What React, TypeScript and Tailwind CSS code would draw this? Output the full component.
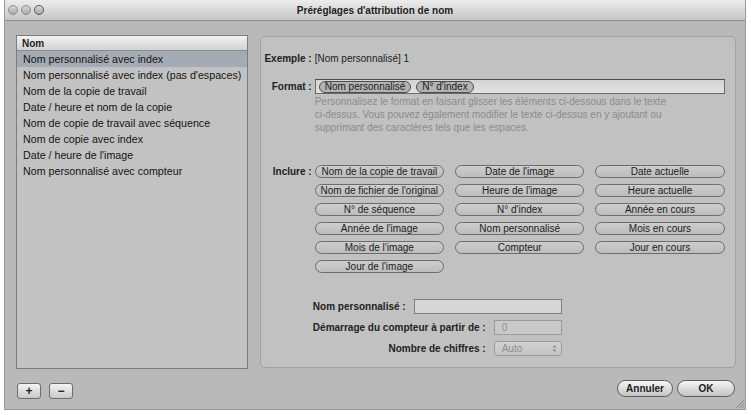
import React from 'react';

const presets = [
  'Nom personnalisé avec index',
  "Nom personnalisé avec index (pas d'espaces)",
  'Nom de la copie de travail',
  'Date / heure et nom de la copie',
  'Nom de copie de travail avec séquence',
  'Nom de copie avec index',
  "Date / heure de l'image",
  'Nom personnalisé avec compteur',
];

const tokens = [
  'Nom de la copie de travail',
  "Date de l'image",
  'Date actuelle',
  "Nom de fichier de l'original",
  "Heure de l'image",
  'Heure actuelle',
  'N° de séquence',
  "N° d'index",
  'Année en cours',
  "Année de l'image",
  'Nom personnalisé',
  'Mois en cours',
  "Mois de l'image",
  'Compteur',
  'Jour en cours',
  "Jour de l'image",
];

const font = 'font-["Liberation_Sans",Arial,sans-serif]';

const TrafficLight = ({ dark }: { dark?: boolean }) => (
  <span
    className={`block w-[10px] h-[10px] rounded-full bg-gradient-to-b from-[#d8d8d8] to-[#a9a9a9] border ${dark ? 'border-[#555]' : 'border-[#8c8c8c]'}`}
  />
);

const Token = ({ label }: { label: string }) => (
  <div className="h-[13px] rounded-full border border-[#6c6c6c] bg-gradient-to-b from-[#cdcdcd] to-[#bdbdbd] flex items-center justify-center text-[10px] leading-none text-[#1c1c1c] whitespace-nowrap overflow-hidden">
    {label}
  </div>
);

const FieldRow = ({ label, children }: { label: string; children: React.ReactNode }) => (
  <div className="flex justify-end items-center gap-[8px] h-[15px]">
    <span className="text-[10px] font-bold text-[#222] whitespace-nowrap">{label}</span>
    {children}
  </div>
);

export default function App() {
  return (
    <div className={`w-[751px] h-[415px] bg-white overflow-hidden ${font}`}>
      <div className="ml-[4px] w-[742px] h-[410px] flex flex-col bg-[#b9b9b9] border-x border-b border-[#9a9a9a]">
        {/* Title bar */}
        <div className="h-[21px] shrink-0 relative flex items-center bg-gradient-to-b from-[#ececec] to-[#c6c6c6] border-b border-[#8f8f8f]">
          <div className="flex items-center gap-[3px] pl-[3px]">
            <TrafficLight />
            <TrafficLight />
            <TrafficLight dark />
          </div>
          <span className="absolute left-0 right-0 text-center text-[10px] font-bold text-[#1e1e1e] pointer-events-none">
            Préréglages d'attribution de nom
          </span>
        </div>

        {/* Body */}
        <div className="flex-1 flex flex-col pl-[11px] pr-[9px] pt-[14px]">
          <div className="flex gap-[12px]">
            {/* Preset list */}
            <div className="w-[232px] h-[334px] border border-[#7d7d7d] bg-[#c2c2c2] flex flex-col">
              <div className="h-[15px] border-b border-[#8c8c8c] bg-gradient-to-b from-[#f2f2f2] to-[#d2d2d2] flex items-center pl-[5px] text-[10px] font-bold text-[#1e1e1e]">
                Nom
              </div>
              {presets.map((p, i) => (
                <div
                  key={p}
                  className={`h-[16px] flex items-center pl-[6px] text-[10.7px] text-[#141414] whitespace-nowrap ${i === 0 ? 'bg-[#a5abb4]' : ''}`}
                >
                  {p}
                </div>
              ))}
            </div>

            {/* Group box */}
            <div className="mt-[1px] w-[477px] h-[332px] rounded-[5px] border border-[#a2a2a2] bg-[#c1c1c1] flex flex-col pl-[3px]">
              <div className="mt-[14px] h-[14px] flex items-center gap-[3px]">
                <span className="w-[48px] flex justify-end text-[10px] font-bold text-[#222] whitespace-nowrap">Exemple :</span>
                <span className="text-[10px] text-[#1c1c1c]">[Nom personnalisé] 1</span>
              </div>

              <div className="mt-[14px] flex items-center gap-[3px]">
                <span className="w-[48px] flex justify-end text-[10px] font-bold text-[#222] whitespace-nowrap">Format :</span>
                <div className="w-[410px] h-[15px] border border-[#6a6a6a] border-t-[#4e4e4e] bg-gradient-to-b from-[#d4d4d4] to-[#e2e2e2] flex items-center gap-[5px] pl-[3px]">
                  <span className="h-[12px] px-[5px] rounded-full border border-[#4f4f4f] bg-[#b3b3b3] flex items-center text-[10px] leading-none text-[#1c1c1c] whitespace-nowrap">
                    Nom personnalisé
                  </span>
                  <span className="h-[12px] px-[5px] rounded-full border border-[#4f4f4f] bg-[#b3b3b3] flex items-center text-[10px] leading-none text-[#1c1c1c] whitespace-nowrap">
                    N° d'index
                  </span>
                </div>
              </div>

              <p className="ml-[51px] mt-[1px] text-[10px] leading-[13px] text-[#8b8b8b]">
                Personnalisez le format en faisant glisser les éléments ci-dessous dans le texte
                <br />
                ci-dessus. Vous pouvez également modifier le texte ci-dessus en y ajoutant ou
                <br />
                supprimant des caractères tels que les espaces.
              </p>

              <div className="mt-[31px] flex items-start gap-[3px]">
                <span className="w-[48px] h-[13px] flex items-center justify-end text-[10px] font-bold text-[#222] whitespace-nowrap">Inclure :</span>
                <div className="w-[410px] grid grid-cols-3 gap-x-[11px] gap-y-[6px]">
                  {tokens.map((t) => (
                    <Token key={t} label={t} />
                  ))}
                </div>
              </div>

              <div className="mt-[26px] w-[298px] flex flex-col gap-[6px]">
                <FieldRow label="Nom personnalisé :">
                  <div className="w-[148px] h-[15px] border border-[#7e7e7e] bg-[#d6d6d6]" />
                </FieldRow>
                <FieldRow label="Démarrage du compteur à partir de :">
                  <div className="w-[68px] h-[15px] border border-[#9a9a9a] bg-[#c9c9c9] flex items-center pl-[7px] text-[10px] text-[#8e8e8e]">
                    0
                  </div>
                </FieldRow>
                <FieldRow label="Nombre de chiffres :">
                  <div className="w-[68px] h-[15px] rounded-[3px] border border-[#9a9a9a] bg-gradient-to-b from-[#d2d2d2] to-[#c4c4c4] flex items-center justify-between pl-[7px] pr-[4px] text-[10px] text-[#8e8e8e]">
                    <span>Auto</span>
                    <svg width="5" height="9" viewBox="0 0 5 9">
                      <path d="M0.5 3.5 L2.5 1 L4.5 3.5 Z M0.5 5.5 L2.5 8 L4.5 5.5 Z" fill="#8a8a8a" />
                    </svg>
                  </div>
                </FieldRow>
              </div>
            </div>
          </div>

          {/* Bottom bar */}
          <div className="mt-[11px] flex items-start justify-between relative">
            <div className="mt-[3px] flex gap-[8px] pl-[1px]">
              <button className="w-[24px] h-[16px] rounded-[3px] border border-[#6e6e6e] bg-gradient-to-b from-[#f4f4f4] to-[#c9c9c9] flex items-center justify-center text-[12px] font-bold leading-none text-[#1c1c1c]">
                +
              </button>
              <button className="w-[24px] h-[16px] rounded-[3px] border border-[#6e6e6e] bg-gradient-to-b from-[#f4f4f4] to-[#c9c9c9] flex items-center justify-center text-[12px] font-bold leading-none text-[#1c1c1c]">
                −
              </button>
            </div>
            <div className="flex gap-[4px] pr-[1px]">
              <button className="w-[56px] h-[17px] rounded-full border border-[#5a5a5a] bg-gradient-to-b from-[#f6f6f6] to-[#c4c4c4] text-[10px] font-bold leading-none text-[#1c1c1c]">
                Annuler
              </button>
              <button className="w-[58px] h-[17px] rounded-full border border-[#5a5a5a] bg-gradient-to-b from-[#f6f6f6] to-[#c4c4c4] text-[10px] font-bold leading-none text-[#1c1c1c]">
                OK
              </button>
            </div>
            <svg className="absolute right-[-9px] top-[18px]" width="11" height="11" viewBox="0 0 11 11">
              <path d="M10 2 L2 10 M10 5 L5 10 M10 8 L8 10" stroke="#8a8a8a" strokeWidth="1" />
            </svg>
          </div>
        </div>
      </div>
    </div>
  );
}
